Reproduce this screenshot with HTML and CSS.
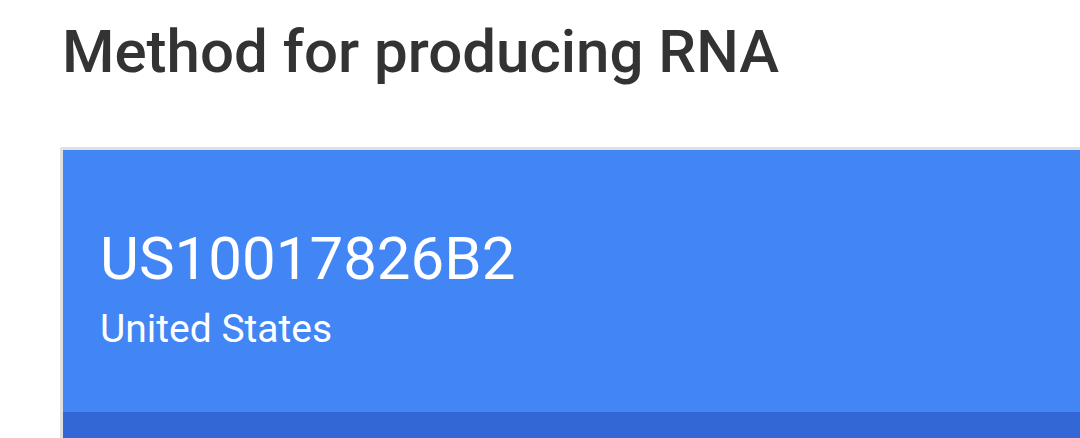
FILE: index.html
```html
<!DOCTYPE html>
<html>
<head>
  <meta charset="utf-8">
  <title>Method for producing RNA</title>
  <link rel="stylesheet" href="styles.css">
</head>
<body>

<h1 class="title">Method for producing RNA</h1>

<div class="card">
  <div class="card-head">
    <div class="pub-num">US10017826B2</div>
    <div class="country">United States</div>
  </div>
  <div class="card-bar"></div>
</div>

</body>
</html>
```

FILE: styles.css
```css
body {
  margin: 0;
  font-family: Roboto, "Liberation Sans", Arial, sans-serif;
  background: #fff;
  overflow: hidden;
}
.title {
  margin: 0;
  padding: 16px 0 0 62px;
  font-size: 60px;
  font-weight: 500;
  line-height: 72px;
  color: #333;
}
.card {
  margin: 59px 0 0 60px;
  border: 3px solid #e0e0e0;
  border-right: none;
  border-bottom: none;
  border-radius: 3px 0 0 0;
}
.card-head {
  background: #4285f4;
  color: #fff;
  padding: 74px 0 0 37px;
  height: 262px;
  box-sizing: border-box;
}
.pub-num {
  font-size: 60px;
  line-height: 70px;
}
.country {
  font-size: 39px;
  line-height: 46px;
  margin-top: 12px;
}
.card-bar {
  background: #3367d6;
  height: 26px;
}
```
